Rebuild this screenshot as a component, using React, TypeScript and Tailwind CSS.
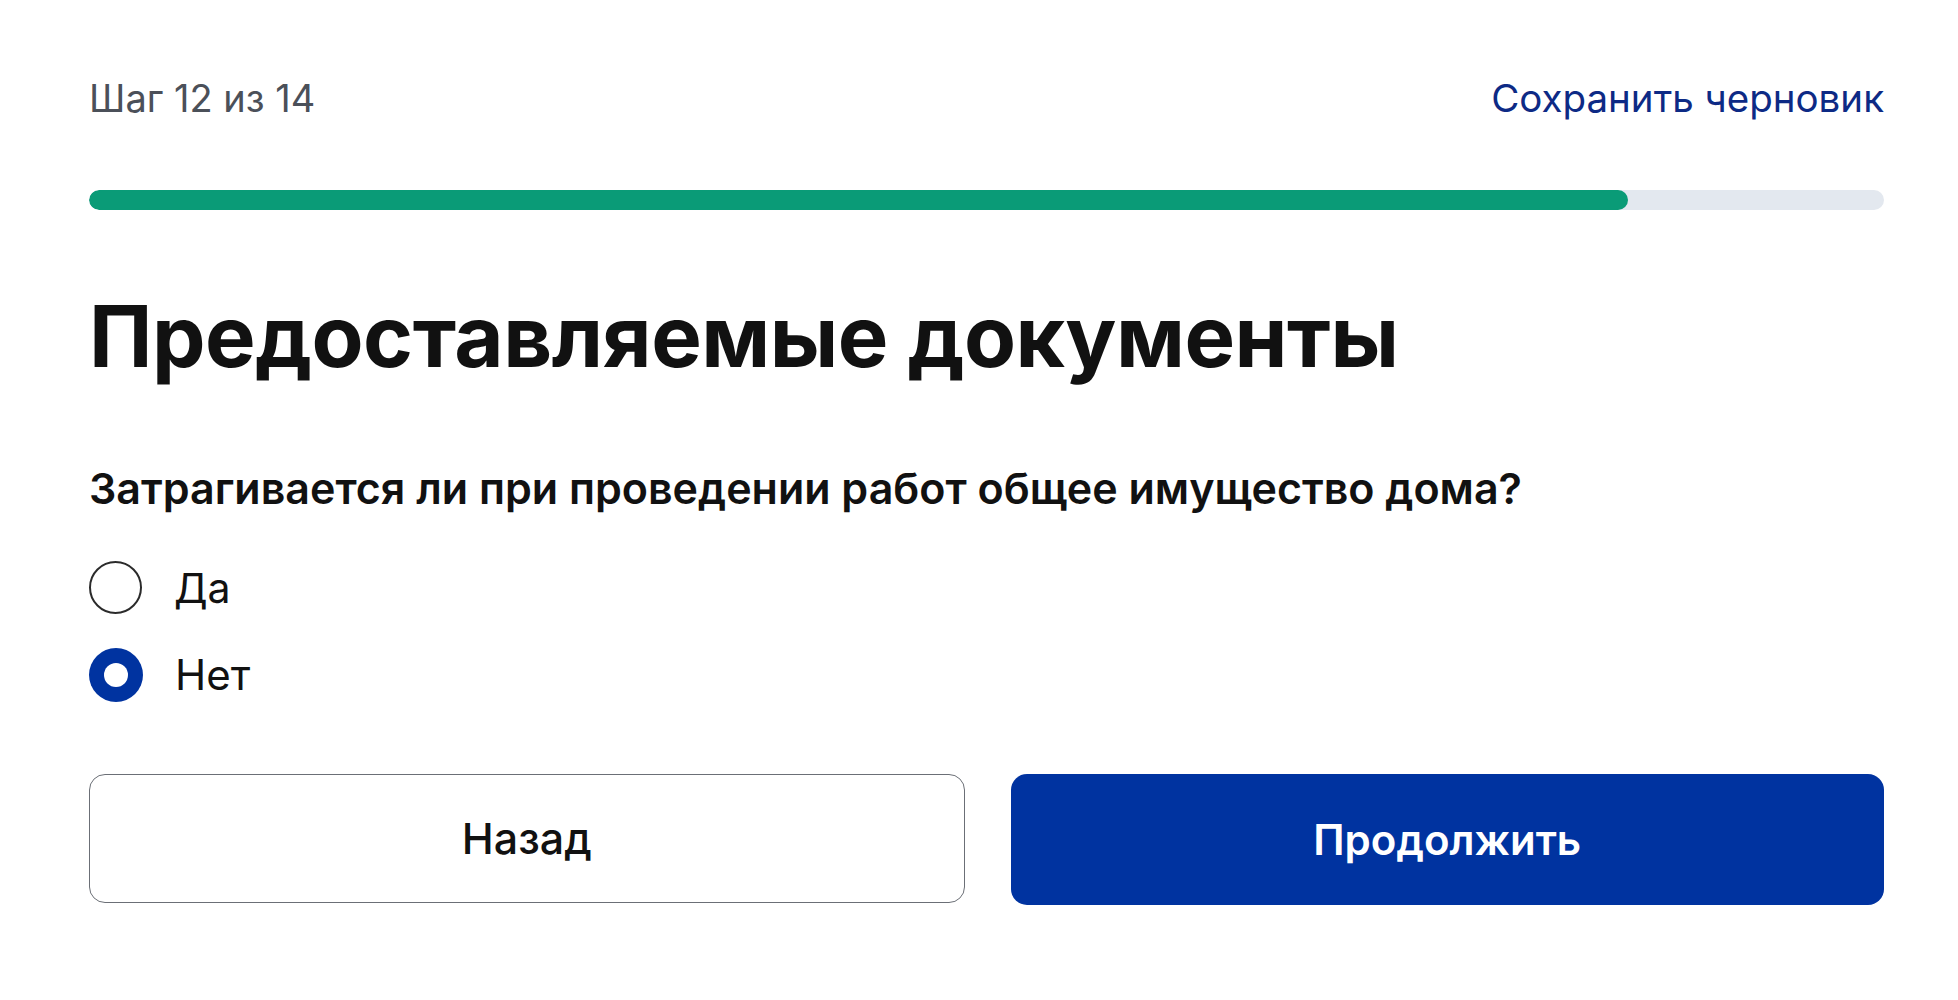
export default function App() {
  const step = 12;
  const total = 14;
  const pct = (step / total) * 100;

  return (
    <div className="min-h-screen bg-white font-['Inter','Noto_Sans',sans-serif] text-[#0b0b0b]">
      <div className="ml-[89px] w-[1795px] pt-[72px]">
        <div className="flex items-center justify-between">
          <span className="text-[38px] leading-[52px] text-[#4b5059]">
            Шаг {step} из {total}
          </span>
          <a href="#" className="text-[38.5px] leading-[52px] text-[#0d2a85]">
            Сохранить черновик
          </a>
        </div>

        <div className="mt-[66px] h-[20px] w-full overflow-hidden rounded-full bg-[#e3e8ef]">
          <div className="h-full rounded-full bg-[#0a9b77]" style={{ width: `${pct}%` }} />
        </div>

        <h1 className="mt-[72px] text-[85px] font-bold leading-[110px] tracking-[-0.5px] text-[#111111]">
          Предоставляемые документы
        </h1>

        <p className="mt-[68px] text-[43px] font-semibold leading-[56px] text-[#111111]">
          Затрагивается ли при проведении работ общее имущество дома?
        </p>

        <div className="mt-[45px] flex flex-col gap-[34px]">
          <label className="flex items-center gap-[32px]">
            <span className="size-[53px] rounded-full border-[2px] border-[#2b2b2b] bg-white" />
            <span className="text-[41px] leading-[52px] text-[#111111]">Да</span>
          </label>
          <label className="flex items-center gap-[32px]">
            <span className="flex size-[54px] items-center justify-center rounded-full bg-[#0033a0]">
              <span className="size-[24px] rounded-full bg-white" />
            </span>
            <span className="text-[42px] leading-[52px] text-[#111111]">Нет</span>
          </label>
        </div>

        <div className="mt-[72px] flex gap-[46px]">
          <button className="h-[129px] flex-1 rounded-[16px] border-[1.5px] border-[#6b6f76] bg-white text-[43px] font-medium text-[#111111]">
            Назад
          </button>
          <button className="h-[131px] flex-1 rounded-[16px] bg-[#0033a0] text-[42px] font-semibold text-white">
            Продолжить
          </button>
        </div>
      </div>
    </div>
  );
}
